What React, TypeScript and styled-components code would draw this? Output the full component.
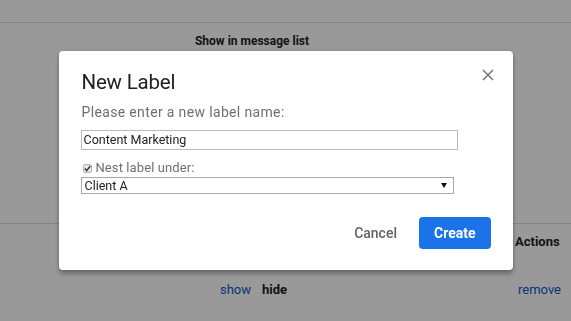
import * as React from 'react';
import styled, { createGlobalStyle } from 'styled-components';

// ______________________________________________________
//
// @ Global

const GlobalStyle = createGlobalStyle`
  html, body {
    margin: 0;
    padding: 0;
    width: 571px;
    height: 321px;
    overflow: hidden;
    background: #fff;
    font-family: Roboto, "Liberation Sans", Arial, sans-serif;
  }
`;

// ______________________________________________________
//
// @ Settings page (behind the overlay)

const Page = styled.div`
  width: 571px;
  height: 321px;
  color: #222;
  font-size: 13px;
`;

const TopBar = styled.div`
  height: 22px;
  border-bottom: 1px solid #dadada;
`;

const Section = styled.div<{ $height: number }>`
  display: grid;
  grid-template-columns: 172px 158px 1fr 58px;
  grid-auto-rows: min-content;
  height: ${(p) => p.$height}px;
  border-bottom: 1px solid #dadada;
  &:last-child {
    border-bottom: none;
  }
`;

const HeadCell = styled.div<{ $align?: string; $col: number; $size?: number }>`
  grid-column: ${(p) => p.$col};
  padding: 10px 0 0 2px;
  line-height: 16px;
  font-size: ${(p) => p.$size || 13}px;
  font-weight: 700;
  text-align: ${(p) => p.$align || 'left'};
  white-space: nowrap;
`;

const Cell = styled.div<{ $align?: string; $col: number }>`
  grid-column: ${(p) => p.$col};
  padding: 32px 0 0 5px;
  line-height: 16px;
  text-align: ${(p) => p.$align || 'left'};
  white-space: nowrap;
`;

const Link = styled.span`
  color: #15c;
  margin-right: 11px;
`;

const Strong = styled.span`
  font-weight: 700;
  color: #222;
`;

// ______________________________________________________
//
// @ Dialog

const Overlay = styled.div`
  position: fixed;
  inset: 0;
  background: rgba(0, 0, 0, 0.4);
  display: flex;
  align-items: center;
  justify-content: center;
`;

const Dialog = styled.div`
  position: relative;
  box-sizing: border-box;
  width: 454px;
  height: 219px;
  padding: 17px 22px 21px 22px;
  background: #fff;
  border-radius: 4px;
  box-shadow: 0 4px 5px rgba(0, 0, 0, 0.3), 0 0 3px rgba(0, 0, 0, 0.15);
  display: flex;
  flex-direction: column;
`;

const Title = styled.h2`
  margin: 0 0 0 1px;
  font-weight: 400;
  font-size: 20.5px;
  line-height: 28px;
  color: #202124;
  letter-spacing: -0.2px;
`;

const Close = styled.button`
  position: absolute;
  top: 18px;
  right: 19px;
  width: 12px;
  height: 12px;
  padding: 0;
  border: none;
  background: none;
  display: flex;
`;

const Prompt = styled.div`
  margin: 6px 0 0 1px;
  font-size: 14px;
  letter-spacing: 0.35px;
  line-height: 20px;
  color: #6f6f6f;
`;

const TextBox = styled.div`
  margin-top: 8px;
  box-sizing: border-box;
  width: 377px;
  height: 20px;
  border: 1px solid #bbb;
  padding: 0 2px;
  font-size: 12.5px;
  line-height: 18px;
  color: #222;
`;

const CheckRow = styled.label`
  display: flex;
  align-items: center;
  gap: 4px;
  margin: 11px 0 0 2px;
  font-size: 13px;
  letter-spacing: 0.1px;
  line-height: 14px;
  color: #6f6f6f;
`;

const Box = styled.span`
  width: 7px;
  height: 7px;
  border: 1px solid #b5b5b5;
  border-radius: 2px;
  background: #e6e6e6;
  display: flex;
  align-items: center;
  justify-content: center;
`;

const Select = styled.div`
  margin-top: 2px;
  box-sizing: border-box;
  width: 373px;
  height: 17px;
  border: 1px solid #a9a9a9;
  padding: 0 6px 0 3px;
  display: flex;
  align-items: center;
  justify-content: space-between;
  font-size: 12.5px;
  line-height: 15px;
  color: #222;
`;

const Arrow = styled.span`
  width: 0;
  height: 0;
  border-left: 3px solid transparent;
  border-right: 3px solid transparent;
  border-top: 5px solid #111;
`;

const Actions = styled.div`
  margin-top: auto;
  display: flex;
  justify-content: flex-end;
  align-items: center;
  gap: 7px;
`;

const Button = styled.button<{ $primary?: boolean }>`
  height: 32px;
  padding: 0 15px;
  border: none;
  border-radius: 4px;
  font-family: Roboto, sans-serif;
  font-size: 14px;
  font-weight: ${(p) => (p.$primary ? 700 : 500)};
  color: ${(p) => (p.$primary ? '#fff' : '#5f6368')};
  background: ${(p) => (p.$primary ? '#1a73e8' : 'transparent')};
`;

// ______________________________________________________
//
// @ View

const App: React.FC = () => (
  <>
    <GlobalStyle />
    <Page>
      <TopBar />
      <Section $height={200}>
        <HeadCell $col={2} $align="center" $size={12}>
          Show in message list
        </HeadCell>
      </Section>
      <Section $height={97}>
        <HeadCell $col={4}>Actions</HeadCell>
        <Cell $col={2} $align="center">
          <Link>show</Link>
          <Strong>hide</Strong>
        </Cell>
        <Cell $col={4}>
          <Link>remove</Link>
        </Cell>
      </Section>
    </Page>
    <Overlay>
      <Dialog>
        <Title>New Label</Title>
        <Close aria-label="Close">
          <svg width="12" height="12" viewBox="0 0 12 12">
            <path d="M1 1 L11 11 M11 1 L1 11" stroke="#777" strokeWidth="1.5" />
          </svg>
        </Close>
        <Prompt>Please enter a new label name:</Prompt>
        <TextBox>Content Marketing</TextBox>
        <CheckRow>
          <Box>
            <svg width="7" height="7" viewBox="0 0 7 7">
              <path d="M0.8 3.6 L2.7 5.6 L6.3 1" stroke="#333" strokeWidth="1.4" fill="none" />
            </svg>
          </Box>
          Nest label under:
        </CheckRow>
        <Select>
          Client A
          <Arrow />
        </Select>
        <Actions>
          <Button>Cancel</Button>
          <Button $primary>Create</Button>
        </Actions>
      </Dialog>
    </Overlay>
  </>
);

export default App;
